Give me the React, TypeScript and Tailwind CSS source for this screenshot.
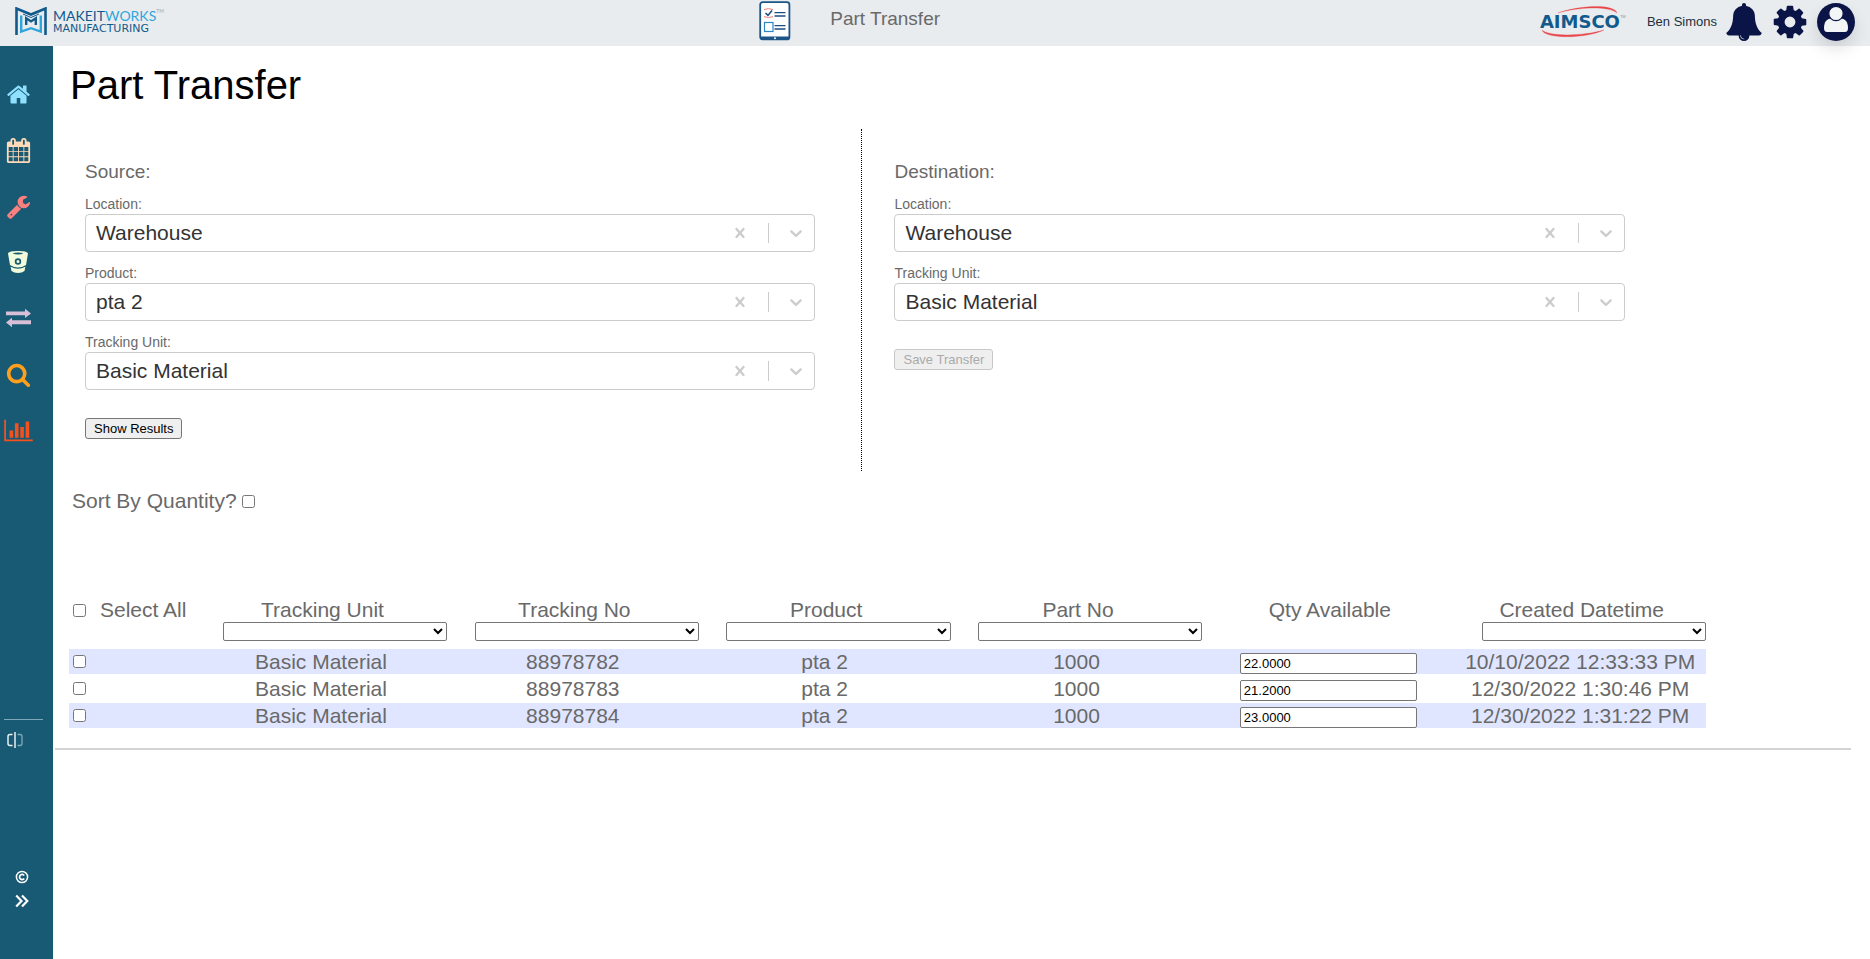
import React, { useState } from 'react';

const ICONS = {
  home: 'M1472 992v480q0 26-19 45t-45 19h-384v-384h-256v384h-384q-26 0-45-19t-19-45v-480q0-1 .5-3t.5-3l575-474 575 474q1 2 1 6zm223-69l-62 74q-8 9-21 11h-3q-13 0-21-7l-692-577-692 577q-12 8-24 7-13-2-21-11l-62-74q-8-10-7-23.5t11-21.5l719-599q32-26 76-26t76 26l244 204v-195q0-14 9-23t23-9h192q14 0 23 9t9 23v408l219 182q10 8 11 21.5t-7 23.5z',
  calendar:
    'M192 1664h288v-288h-288v288zm352 0h320v-288h-320v288zm-352-352h288v-320h-288v320zm352 0h320v-320h-320v320zm-352-384h288v-288h-288v288zm736 736h320v-288h-320v288zm-384-736h320v-288h-320v288zm768 736h288v-288h-288v288zm-384-352h320v-320h-320v320zm-352-864v-288q0-13-9.5-22.5t-22.5-9.5h-64q-13 0-22.5 9.5t-9.5 22.5v288q0 13 9.5 22.5t22.5 9.5h64q13 0 22.5-9.5t9.5-22.5zm736 864h288v-320h-288v320zm-384-384h320v-288h-320v288zm384 0h288v-288h-288v288zm32-480v-288q0-13-9.5-22.5t-22.5-9.5h-64q-13 0-22.5 9.5t-9.5 22.5v288q0 13 9.5 22.5t22.5 9.5h64q13 0 22.5-9.5t9.5-22.5zm384-64v1280q0 52-38 90t-90 38h-1408q-52 0-90-38t-38-90v-1280q0-52 38-90t90-38h128v-96q0-66 47-113t113-47h64q66 0 113 47t47 113v96h384v-96q0-66 47-113t113-47h64q66 0 113 47t47 113v96h128q52 0 90 38t38 90z',
  wrench:
    'M448 1472q0-26-19-45t-45-19-45 19-19 45 19 45 45 19 45-19 19-45zm644-420l-682 682q-37 37-90 37-52 0-91-37l-106-108q-38-36-38-90 0-53 38-91l681-681q39 98 114.5 173.5t173.5 114.5zm634-435q0 39-23 106-47 134-164.5 217.5t-258.5 83.5q-185 0-316.5-131.5t-131.5-316.5 131.5-316.5 316.5-131.5q58 0 121.5 16.5t107.5 46.5q16 11 16 28t-16 28l-293 169v224l193 107q5-3 79-48.5t135.5-81 70.5-35.5q15 0 23.5 10t8.5 25z',
  search:
    'M1216 832q0-185-131.5-316.5t-316.5-131.5-316.5 131.5-131.5 316.5 131.5 316.5 316.5 131.5 316.5-131.5 131.5-316.5zm512 832q0 52-38 90t-90 38q-54 0-90-38l-343-342q-179 124-399 124-143 0-273.5-55.5t-225-150-150-225-55.5-273.5 55.5-273.5 150-225 225-150 273.5-55.5 273.5 55.5 225 150 150 225 55.5 273.5q0 220-124 399l343 343q37 37 37 90z',
  chart:
    'M640 896v512h-256v-512h256zm384-512v1024h-256v-1024h256zm1024 1152v128h-2048v-1536h128v1408h1920zm-640-896v768h-256v-768h256zm384-384v1152h-256v-1152h256z',
  cog: 'M1152 896q0-106-75-181t-181-75-181 75-75 181 75 181 181 75 181-75 75-181zm512-109v222q0 12-8 23t-20 13l-185 28q-19 54-39 91 35 50 107 138 10 12 10 25t-9 23q-27 37-99 108t-94 71q-12 0-26-9l-138-108q-44 23-91 38-16 136-29 186-7 28-36 28h-222q-14 0-24.5-8.5t-11.5-21.5l-28-184q-49-16-90-37l-141 107q-10 9-25 9-14 0-25-11-126-114-165-168-7-10-7-23 0-12 8-23 15-21 51-66.5t54-70.5q-27-50-41-99l-183-27q-13-2-21-12.5t-8-23.5v-222q0-12 8-23t19-13l186-28q14-46 39-92-40-57-107-138-10-12-10-24 0-10 9-23 26-36 98.5-107.5t94.5-71.5q13 0 26 10l138 107q44-23 91-38 16-136 29-186 7-28 36-28h222q14 0 24.5 8.5t11.5 21.5l28 184q49 16 90 37l142-107q9-9 24-9 13 0 25 10 129 119 165 170 7 8 7 22 0 12-8 23-15 21-51 66.5t-54 70.5q26 50 41 98l183 28q13 2 21 12.5t8 23.5z',
  bell: 'M912 1696q0-16-16-16-59 0-101.5-42.5t-42.5-101.5q0-16-16-16t-16 16q0 73 51.5 124.5t124.5 51.5q16 0 16-16zm816-288q0 52-38 90t-90 38h-448q0 106-75 181t-181 75-181-75-75-181h-448q-52 0-90-38t-38-90q50-42 91-88t85-119.5 74.5-158.5 50-206 19.5-260q0-152 117-282.5t307-158.5q-8-19-8-39 0-40 28-68t68-28 68 28 28 68q0 20-8 39 190 28 307 158.5t117 282.5q0 139 19.5 260t50 206 74.5 158.5 85 119.5 91 88z',
};

function Glyph({ d, className, box = '0 0 1792 1792' }: { d: string; className: string; box?: string }) {
  return (
    <svg viewBox={box} className={className} fill="currentColor" aria-hidden="true">
      <path d={d} />
    </svg>
  );
}

function MakeItWorksLogo() {
  return (
    <a href="#home" className="flex items-center gap-1.5">
      <svg viewBox="0 0 32 28" className="h-7 w-8" fill="none" aria-hidden="true">
        <path d="M1.5 28V1.5L16 7.5L30.5 1.5V28" stroke="#125a8c" strokeWidth="2.6" />
        <path d="M6.2 8.5V24.6L16 21.2L25.8 24.6V8.5" stroke="#2fa5da" strokeWidth="2.4" />
        <path d="M11.2 18V11.2L16 14.4L20.8 11.2V18" stroke="#125a8c" strokeWidth="2.4" />
        <path d="M8 7L16 10.5L24 7" stroke="#125a8c" strokeWidth="1" />
      </svg>
      <span className="flex flex-col font-['Lato',sans-serif] text-[#125a8c]">
        <span className="flex text-[14px] leading-[15px]">
          MAKEIT<span className="text-[#2fa5da]">WORKS</span>
          <span className="text-[5px] leading-[7px] text-[#9aa5ad]">TM</span>
        </span>
        <span className="font-['DejaVu_Sans',sans-serif] text-[11px] leading-[11px]">MANUFACTURING</span>
      </span>
    </a>
  );
}

function ChecklistIcon() {
  return (
    <svg viewBox="0 0 32 40" className="h-10 w-8" fill="none" aria-hidden="true">
      <rect x="1.2" y="1.2" width="29.2" height="37.2" rx="2.5" fill="#fff" stroke="#1d5587" strokeWidth="1.8" />
      <path d="M1 35.4H30.6V37Q30.6 39 28 39H4Q1 39 1 37Z" fill="#1d5587" />
      <circle cx="16" cy="37.2" r="1" fill="#fff" />
      <path d="M5 8.6Q9.5 6.6 14 8.6M5 15.6Q9.5 17.6 14 15.6" stroke="#f08080" strokeWidth="1" />
      <path d="M6.5 12L9 14.4L13 9.6" stroke="#1d4c80" strokeWidth="1.6" />
      <rect x="5.5" y="21.5" width="8.5" height="9" stroke="#2b86c5" strokeWidth="1.2" />
      <path d="M15.5 11.6H26.5M15.5 15H26.5M15.5 24.6H26.5M15.5 28H26.5" stroke="#1d4c80" strokeWidth="1.3" />
    </svg>
  );
}

function AimscoLogo() {
  return (
    <div className="relative flex h-8 w-[87px] items-center">
      <svg viewBox="0 0 87 32" className="absolute inset-0 h-8 w-[87px]" aria-hidden="true">
        <path d="M18 7C36 0 74 -3 77 7C70 0 38 1 18 7Z" fill="#e8474c" stroke="#e8474c" strokeWidth=".3" />
        <path d="M2 24C4 33 46 33 64 24C44 30 10 31 2 24Z" fill="#e8474c" stroke="#e8474c" strokeWidth=".3" />
      </svg>
      <span className="relative font-['DejaVu_Sans',sans-serif] text-[18px] leading-8 font-bold text-[#125a8c]">AIMSCO</span>
      <span className="relative self-start pt-2 text-[4px] leading-[5px] text-[#7f95a5]">TM</span>
    </div>
  );
}

function Header() {
  return (
    <header className="relative z-10 flex h-[46px] items-start bg-[#e9ecef]">
      <div className="w-[40.6%] pt-[7px] pl-[15px]">
        <MakeItWorksLogo />
      </div>
      <div className="flex flex-1 items-start gap-[39px] pt-px">
        <ChecklistIcon />
        <span className="pt-[7px] text-[19px] leading-[22px]">Part Transfer</span>
      </div>
      <div className="flex h-11 items-center pr-[15px]">
        <AimscoLogo />
        <span className="ml-5 text-[13px] text-[#212f3c]">Ben Simons</span>
        <button aria-label="Notifications" className="ml-2 text-[#0b1446]">
          <Glyph d={ICONS.bell} className="size-[38px]" />
        </button>
        <button aria-label="Settings" className="ml-2 text-[#0b1446]">
          <Glyph d={ICONS.cog} className="size-[38px]" />
        </button>
        <button aria-label="Account" className="ml-2 rounded-full shadow-[0_8px_16px_rgba(0,0,0,0.12)]">
          <svg viewBox="0 0 38 38" className="size-[38px]" aria-hidden="true">
            <circle cx="19" cy="19" r="19" fill="#0b1446" />
            <path d="M7 25C7 19 10 15.5 14 15.5H24C28 15.5 31 19 31 25C31 28 29.500 29 28 29H10C8.500 29 7 28 7 25Z" fill="#f2f6f6" />
            <circle cx="19" cy="10.500" r="7.200" fill="#f2f6f6" stroke="#0b1446" strokeWidth="1.200" />
          </svg>
        </button>
      </div>
    </header>
  );
}

function Sidebar() {
  const item = 'flex h-14 items-center';
  return (
    <nav aria-label="Main" className="flex w-[53px] shrink-0 flex-col bg-[#185a73] pt-5">
      <a href="#home" aria-label="Home" className={`${item} pl-1.5 text-[#8fe0ff]`}>
        <Glyph d={ICONS.home} className="size-[25px]" />
      </a>
      <a href="#calendar" aria-label="Calendar" className={`${item} pl-1.5 text-[#ffdab9]`}>
        <Glyph d={ICONS.calendar} className="size-[25px]" />
      </a>
      <a href="#tools" aria-label="Tools" className={`${item} pl-1.5 text-[#fa8080]`}>
        <Glyph d={ICONS.wrench} className="size-[25px]" />
      </a>
      <a href="#materials" aria-label="Materials" className={`${item} pl-2 text-[#f0fcdc]`}>
        <svg viewBox="0 0 20 22" className="h-[22px] w-5" aria-hidden="true">
          <path
            fill="currentColor"
            fillRule="evenodd"
            d="M0 2.500C0 .8 5 0 10 0S20 .8 20 2.500L18 14Q14 16.600 10 16.600T2 14ZM4.500 2.300Q10 4.800 15.500 2.300Q10 .9 4.500 2.300ZM10 7.300A3.200 3.200 0 1 0 10 13.700A3.200 3.200 0 1 0 10 7.300ZM10 9A1.500 1.500 0 1 1 10 12A1.500 1.500 0 1 1 10 9ZM2.600 15.800Q10 19.800 17.400 15.800L16.500 20Q14 22 10 22T3.500 20Z"
          />
        </svg>
      </a>
      <a href="#transfer" aria-label="Transfer" className={`${item} pl-1.5 text-[#d8bfd8]`}>
        <svg viewBox="0 0 25 20" className="h-5 w-[25px]" fill="currentColor" aria-hidden="true">
          <path d="M0 3.500H19V.8L25 5.500L19 10V7.200H0ZM25 12.300H6V9.700L0 14.500L6 19.200V16.300H25Z" />
        </svg>
      </a>
      <a href="#search" aria-label="Search" className={`${item} pl-1.5 text-[#ff9f1c]`}>
        <Glyph d={ICONS.search} className="size-[25px]" />
      </a>
      <a href="#reports" aria-label="Reports" className={`${item} pl-1 text-[#f4511e]`}>
        <Glyph d={ICONS.chart} box="0 0 2048 1792" className="h-[25px] w-[29px]" />
      </a>
      <div className="mt-[261px] ml-1 w-[39px] border-t border-[#7fa9b8]" />
      <button aria-label="Toggle view" className="mt-3 ml-[7px] w-4">
        <svg viewBox="0 0 16 16" className="size-4" fill="none" aria-hidden="true">
          <path d="M5.500 2.500H3Q1 2.500 1 4.500V11.500Q1 13.500 3 13.500H5.500" stroke="#e8f0f2" strokeWidth="1.500" />
          <path d="M8 0V16" stroke="#e8f0f2" strokeWidth="1.500" />
          <path d="M10.500 2.500H13Q15 2.500 15 4.500V11.500Q15 13.500 13 13.500H10.500" stroke="#84a9b6" strokeWidth="1.300" />
        </svg>
      </button>
      <div className="mt-[122px] flex flex-col gap-2.5 pl-[15px] text-white">
        <svg viewBox="0 0 14 14" className="size-3.5" fill="none" stroke="currentColor" role="img" aria-label="Copyright">
          <circle cx="7" cy="7" r="5.600" strokeWidth="1.500" />
          <path d="M9.200 5.400A2.600 2.600 0 1 0 9.200 8.600" strokeWidth="1.700" />
        </svg>
        <button aria-label="Expand menu" className="w-3.5">
          <svg viewBox="0 0 14 14" className="size-3.5" fill="none" stroke="currentColor" strokeWidth="2.200" aria-hidden="true">
            <path d="M1.200 1.500L6.500 7L1.200 12.500M7 1.500L12.300 7L7 12.500" />
          </svg>
        </button>
      </div>
    </nav>
  );
}

function Field({ id, label, initial }: { id: string; label: string; initial: string }) {
  const [value, setValue] = useState(initial);
  return (
    <div>
      <label htmlFor={id} className="block text-[14px] leading-[19px]">
        {label}
      </label>
      <div className="relative">
        <select
          id={id}
          value={value}
          onChange={(e) => setValue(e.target.value)}
          className="block h-[38px] w-full appearance-none rounded-[4px] border border-[#ccc] bg-white pl-2.5 text-[21px] text-[#333]"
        >
          <option value=""></option>
          <option value={initial}>{initial}</option>
        </select>
        <div className="pointer-events-none absolute inset-y-0 right-[9px] flex items-center text-[#ccc]">
          <button aria-label={`Clear ${label}`} onClick={() => setValue('')} className="pointer-events-auto mr-[18px]">
            <Glyph
              box="0 0 20 20"
              className="size-5"
              d="M14.348 14.849c-0.469 0.469-1.229 0.469-1.697 0l-2.651-3.030-2.651 3.029c-0.469 0.469-1.229 0.469-1.697 0-0.469-0.469-0.469-1.229 0-1.697l2.758-3.15-2.759-3.152c-0.469-0.469-0.469-1.228 0-1.697s1.228-0.469 1.697 0l2.652 3.031 2.651-3.031c0.469-0.469 1.228-0.469 1.697 0s0.469 1.229 0 1.697l-2.758 3.152 2.758 3.15c0.469 0.469 0.469 1.229 0 1.698z"
            />
          </button>
          <span className="h-5 w-px bg-[#ccc]" />
          <Glyph
            box="0 0 20 20"
            className="ml-[17px] size-5"
            d="M4.516 7.548c0.436-0.446 1.043-0.481 1.576 0l3.908 3.747 3.908-3.747c0.533-0.481 1.141-0.446 1.574 0 0.436 0.445 0.408 1.197 0 1.615-0.406 0.418-4.695 4.502-4.695 4.502-0.217 0.223-0.502 0.335-0.787 0.335s-0.57-0.112-0.789-0.335c0 0-4.287-4.084-4.695-4.502s-0.436-1.17 0-1.615z"
          />
        </div>
      </div>
    </div>
  );
}

const COLUMNS = [
  { name: 'Tracking Unit', filter: true },
  { name: 'Tracking No', filter: true },
  { name: 'Product', filter: true },
  { name: 'Part No', filter: true },
  { name: 'Qty Available', filter: false },
  { name: 'Created Datetime', filter: true },
];

const ROWS = [
  { unit: 'Basic Material', no: '88978782', product: 'pta 2', part: '1000', qty: '22.0000', created: '10/10/2022 12:33:33 PM' },
  { unit: 'Basic Material', no: '88978783', product: 'pta 2', part: '1000', qty: '21.2000', created: '12/30/2022 1:30:46 PM' },
  { unit: 'Basic Material', no: '88978784', product: 'pta 2', part: '1000', qty: '23.0000', created: '12/30/2022 1:31:22 PM' },
];

function ResultsTable() {
  return (
    <table className="mt-[83px] ml-4 w-[90.1%] table-fixed border-separate border-spacing-x-0 border-spacing-y-[2px] text-[21px] leading-6">
      <thead>
        <tr>
          <th className="w-[7.7%] p-0 text-left align-top font-normal">
            <label className="flex items-center gap-3.5 pl-1 whitespace-nowrap">
              <input type="checkbox" className="size-[13px]" />
              Select All
            </label>
          </th>
          {COLUMNS.map((c) => (
            <th key={c.name} className="p-0 pb-1.5 align-top font-normal">
              <span className="block pl-[3px]">{c.name}</span>
              {c.filter && (
                <select
                  aria-label={`Filter by ${c.name}`}
                  className="ml-auto block h-[19px] w-[89%] rounded-[2px] border border-[#767676] bg-white text-[13px] text-black"
                >
                  <option></option>
                </select>
              )}
            </th>
          ))}
        </tr>
      </thead>
      <tbody className="text-center">
        {ROWS.map((r) => (
          <tr key={r.no} className="h-[25px] odd:bg-[#e0e6ff]">
            <td className="p-0">
              <input type="checkbox" aria-label={`Select ${r.no}`} className="ml-1 block size-[13px]" />
            </td>
            <td className="p-0">{r.unit}</td>
            <td className="p-0">{r.no}</td>
            <td className="p-0">{r.product}</td>
            <td className="p-0">{r.part}</td>
            <td className="p-0 pt-1">
              <input
                type="text"
                aria-label={`Quantity of ${r.no}`}
                defaultValue={r.qty}
                className="mx-auto block h-[21px] w-[177px] rounded-[2px] border border-[#767676] bg-white px-[3px] text-[13px] text-black"
              />
            </td>
            <td className="p-0 whitespace-nowrap">{r.created}</td>
          </tr>
        ))}
      </tbody>
    </table>
  );
}

export default function App() {
  return (
    <div className="flex min-h-screen flex-col bg-white font-['Liberation_Sans',Arial,sans-serif] text-[#696969]">
      <Header />
      <div className="flex flex-1">
        <Sidebar />
        <main className="min-w-0 flex-1 pt-[15px]">
          <h1 className="pl-[17px] text-[40px] leading-[48px] text-black">Part Transfer</h1>
          <div className="mt-5 grid w-[89.1%] grid-cols-2">
            <section className="border-r border-dotted border-black pt-8 pr-[46px] pb-8 pl-8">
              <h2 className="mb-3 text-[19px] leading-[22px]">Source:</h2>
              <div className="flex flex-col gap-3">
                <Field id="source-location" label="Location:" initial="Warehouse" />
                <Field id="source-product" label="Product:" initial="pta 2" />
                <Field id="source-unit" label="Tracking Unit:" initial="Basic Material" />
              </div>
              <button className="mt-7 block h-[21px] rounded-[3px] border border-[#767676] bg-[#efefef] px-2 text-[13px] leading-[19px] text-black">
                Show Results
              </button>
            </section>
            <section className="pt-8 pr-[47px] pb-8 pl-8">
              <h2 className="mb-3 text-[19px] leading-[22px]">Destination:</h2>
              <div className="flex flex-col gap-3">
                <Field id="destination-location" label="Location:" initial="Warehouse" />
                <Field id="destination-unit" label="Tracking Unit:" initial="Basic Material" />
              </div>
              <button
                disabled
                className="mt-7 block h-[21px] rounded-[3px] border border-[#c8c8c8] bg-[#efefef] px-2 text-[13px] leading-[19px] text-[#aaa]"
              >
                Save Transfer
              </button>
            </section>
          </div>
          <label className="mt-[18px] ml-[19px] flex w-fit items-center gap-[5px] text-[21px] leading-6">
            Sort By Quantity?
            <input type="checkbox" className="size-[13px]" />
          </label>
          <ResultsTable />
          <hr className="mt-[18px] mr-[19px] ml-0.5 border-t-2 border-[#d3d3d3]" />
        </main>
      </div>
    </div>
  );
}
